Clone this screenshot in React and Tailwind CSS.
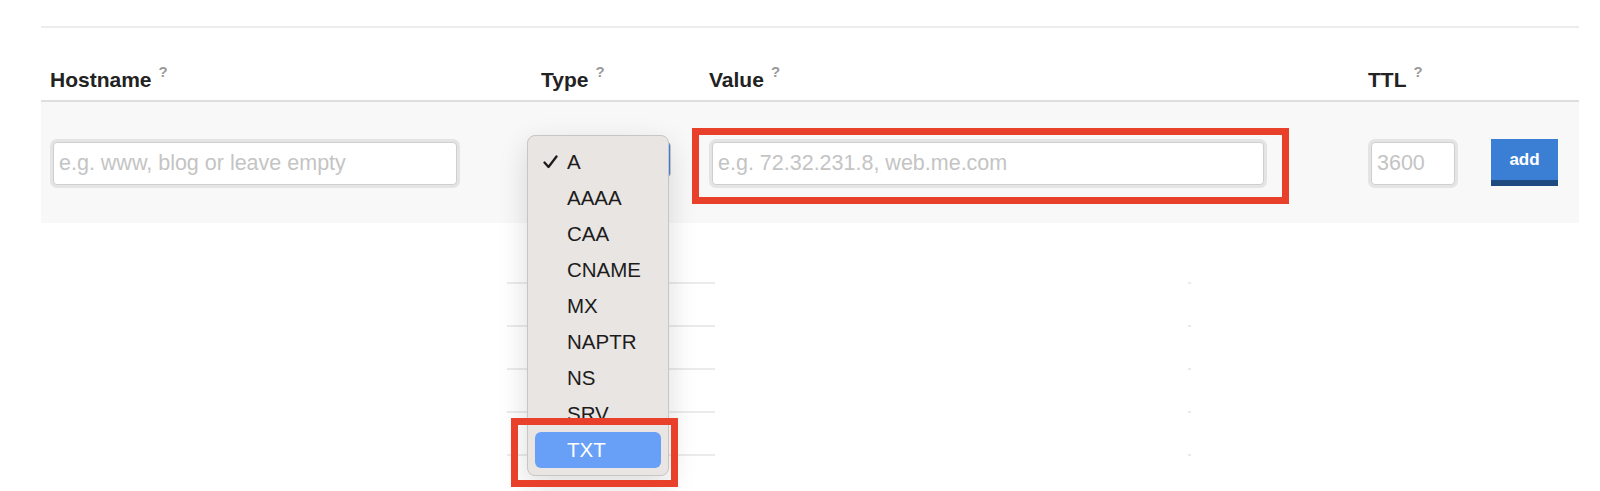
import React from 'react'

const TYPES = ['A', 'AAAA', 'CAA', 'CNAME', 'MX', 'NAPTR', 'NS', 'SRV', 'TXT']

function Hint() {
  return (
    <span className="ml-[7px] -mt-[5px] text-[15px] leading-none font-bold text-[#9a9a9a]">?</span>
  )
}

function HeaderCell({ label, width }) {
  return (
    <div className={`flex items-start pl-[9px] ${width}`}>
      <span className="text-[21px] leading-[21px] font-bold text-[#222]">{label}</span>
      <Hint />
    </div>
  )
}

function TextInput({ placeholder, width }) {
  return (
    <input
      type="text"
      placeholder={placeholder}
      className={`ml-[3px] h-[43px] ${width} rounded-[4px] border border-[#cfcfcf] bg-white px-[5px] text-[21.5px] text-[#333] shadow-[0_0_0_3px_#e4e4e4] outline-none placeholder:text-[#c4c4c4]`}
    />
  )
}

function Check() {
  return (
    <svg width="15" height="14" viewBox="0 0 15 14" fill="none">
      <path d="M1.5 7.5 L5.5 12 L13.5 1.5" stroke="#1c1c1c" strokeWidth="2.3" strokeLinecap="round" strokeLinejoin="round" />
    </svg>
  )
}

function TypeMenu() {
  return (
    <div className="absolute left-[486px] top-[33px] z-10 w-[142px] h-[341px] rounded-[8px] border border-[#c9c5c2] bg-[#e9e5e2] pt-[8px] pb-[7px] shadow-[0_10px_30px_rgba(0,0,0,0.14)]">
      {TYPES.map(t => {
        const active = t === 'TXT'
        return (
          <div
            key={t}
            className={`mx-[7px] h-[36px] rounded-[6px] flex items-center ${active ? 'bg-[#68a0f7] text-white' : 'text-[#1c1c1c]'}`}
          >
            <div className="w-[32px] pl-[8px] flex items-center">{t === 'A' && <Check />}</div>
            <span className="text-[20.5px] leading-none">{t}</span>
          </div>
        )
      })}
    </div>
  )
}

export default function App() {
  return (
    <div className="w-[1600px] h-[491px] overflow-hidden bg-white font-['Liberation_Sans',Arial,sans-serif]">
      <div className="ml-[41px] w-[1538px] pt-[26px]">
        <div className="h-[2px] bg-[#ececec]" />

        {/* header */}
        <div className="flex h-[74px] items-end pb-[10px] border-b-2 border-[#dedede]">
          <HeaderCell label="Hostname" width="w-[491px]" />
          <HeaderCell label="Type" width="w-[168px]" />
          <HeaderCell label="Value" width="w-[659px]" />
          <HeaderCell label="TTL" width="w-[123px]" />
        </div>

        {/* new record row */}
        <div className="relative flex items-start h-[121px] pt-[40px] bg-[#f8f8f8]">
          <div className="w-[491px] pl-[9px]">
            <TextInput placeholder="e.g. www, blog or leave empty" width="w-[404px]" />
          </div>
          <div className="w-[168px] pl-[9px]">
            <div className="-mt-[1px] h-[37px] w-[130px] rounded-[5px] border border-[#c8c8c8] bg-white overflow-hidden flex justify-end">
              <div className="w-[20px] bg-[#3d82f0]" />
            </div>
          </div>
          <div className="w-[659px] pl-[9px]">
            <TextInput placeholder="e.g. 72.32.231.8, web.me.com" width="w-[552px]" />
          </div>
          <div className="w-[123px] pl-[9px]">
            <TextInput placeholder="3600" width="w-[84px]" />
          </div>
          <div className="pl-[9px]">
            <button className="-mt-[3px] w-[67px] h-[47px] bg-[#3b7fd4] border-b-[6px] border-[#1f4a80] text-white text-[17px] font-bold">
              add
            </button>
          </div>

          <TypeMenu />

          {/* annotations */}
          <div className="absolute left-[651px] top-[26px] w-[597px] h-[76px] border-[7px] border-[#e8402a] z-20" />
          <div className="absolute left-[470px] top-[316px] w-[167px] h-[69px] border-[7px] border-[#e8402a] z-20" />
        </div>

        {/* faint record lines below */}
        <div className="mt-[18px] ml-[466px]">
          {[0, 1, 2, 3, 4].map(i => (
            <div key={i} className="flex h-[43px]">
              <div className="w-[208px] border-b-2 border-[#ebebeb]" />
              <div className="ml-[473px] w-[3px] border-b-2 border-[#ebebeb]" />
            </div>
          ))}
        </div>
      </div>
    </div>
  )
}
